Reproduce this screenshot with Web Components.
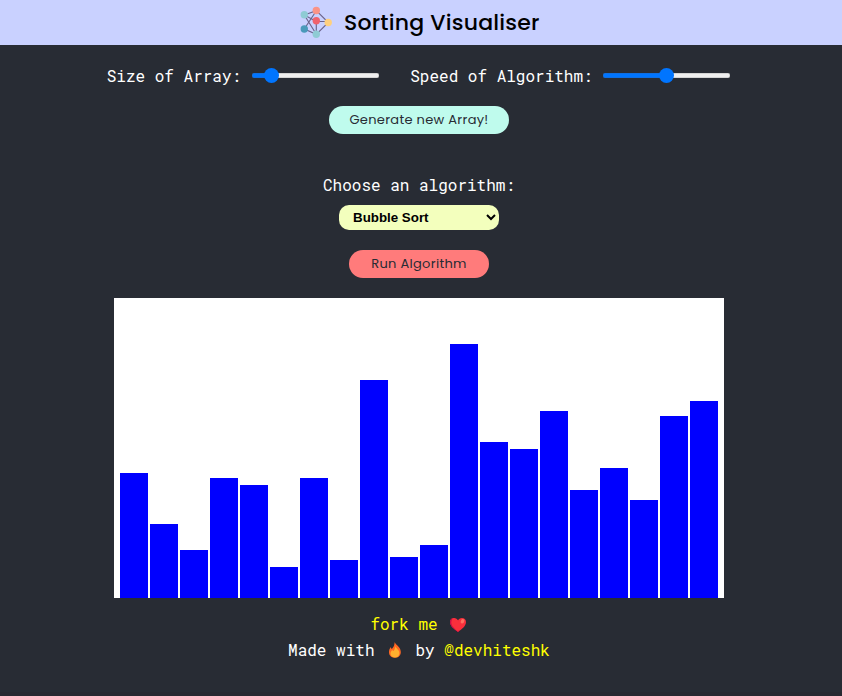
<!DOCTYPE html>
<html lang="en">
<head>
<meta charset="utf-8">
<title>Sorting Visualiser</title>
<style>
html,body{margin:0;background:#282c34}
body{height:696px;overflow:hidden;font:450 16px/26px "Roboto Mono","DejaVu Sans Mono",monospace;color:#fff}
</style>
</head>
<body>
<sorting-app></sorting-app>
<script>
function define(name, html, setup) {
  const t = document.createElement('template');
  t.innerHTML = html;
  customElements.define(name, class extends HTMLElement {
    constructor() {
      super();
      this.attachShadow({mode: 'open'}).append(t.content.cloneNode(true));
    }
    connectedCallback() { if (setup) setup(this, this.shadowRoot); }
  });
}

define('graph-logo', `
<style>:host{display:block;width:32px;height:32px}svg{display:block}</style>
<svg width="32" height="32" viewBox="0 0 32 32">
  <g stroke="#6b638b" stroke-width="1.15" fill="none">
    <path d="M4.300 9L16.300 4.700L28.300 16.500L16.300 28.300L4.300 23L16.300 4.700M4.300 9L16.300 28.300M4.300 9L16.300 15.500H28.300M16.300 15V28.300"/>
  </g>
  <circle cx="16.300" cy="4.500" r="3.700" fill="#fa9387"/>
  <circle cx="4.300" cy="8.800" r="3.700" fill="#8fcbd4"/>
  <circle cx="16.300" cy="14.800" r="3.700" fill="#f0616d"/>
  <circle cx="28.200" cy="16.500" r="3.700" fill="#ffd07d"/>
  <circle cx="4.300" cy="23" r="3.700" fill="#4a9aba"/>
  <circle cx="16.300" cy="28.300" r="3.700" fill="#8fcbd4"/>
</svg>`);

define('app-header', `
<style>
:host{display:flex;height:45px;box-sizing:border-box;padding:0 3px 0 0;background:#c9d1ff;color:#000;align-items:center;justify-content:center;gap:12px}
h1{margin:0;width:195px;white-space:nowrap;font:500 22px/44px Poppins,Inter,sans-serif;letter-spacing:.2px}
graph-logo{margin-bottom:1px}
</style>
<graph-logo></graph-logo><h1><slot></slot></h1>`);

define('range-field', `
<style>
:host{display:flex;align-items:center;height:24px}
label{white-space:pre}
input{-webkit-appearance:none;appearance:none;background:none;margin:0 1px 1px 10.6px;width:127px;height:16px}
input::-webkit-slider-runnable-track{height:5px;border-radius:2px;box-shadow:inset 0 0 0 .5px rgba(90,90,90,.35);background:linear-gradient(90deg,#0075ff var(--at),#efefef var(--at))}
input::-webkit-slider-thumb{-webkit-appearance:none;width:15px;height:15px;margin-top:-5px;border-radius:50%;background:#0075ff}
</style>
<label><slot></slot></label><input type="range" min="0" max="100">`,
(el, root) => {
  const input = root.querySelector('input');
  input.value = el.getAttribute('value');
  const paint = () => input.style.setProperty('--at', `calc(8px + (100% - 16px) * ${input.value / 100})`);
  input.addEventListener('input', paint);
  paint();
});

define('pill-button', `
<style>
:host{display:block}
button{display:block;width:100%;height:28px;padding:0 0 1px;border:0;border-radius:14px;background:var(--fill);color:#282c34;font:400 13px/27px Poppins,Inter,sans-serif;letter-spacing:.3px;white-space:nowrap}
</style>
<button><slot></slot></button>`);

define('algorithm-select', `
<style>
:host{display:block;width:160px;height:25px}
select{display:block;width:160px;height:25px;border:0;border-radius:10px;padding:0 1px 0 10px;background:#f3ffbd;color:#000;font:700 13.333px "Liberation Sans",Arial,sans-serif}
</style>
<select><option>Bubble Sort</option><option>Selection Sort</option><option>Insertion Sort</option><option>Merge Sort</option><option>Quick Sort</option></select>`);

define('bar-chart', `
<style>
:host{display:flex;box-sizing:border-box;width:610px;height:300px;padding:0 6px;background:#fff;align-items:flex-end;gap:2px}
i{display:block;width:28px;background:#00f}
</style>`,
(el, root) => {
  for (const v of el.getAttribute('values').split(',')) {
    const bar = document.createElement('i');
    bar.style.height = v + 'px';
    root.append(bar);
  }
});

define('heart-icon', `
<style>:host{display:block;width:18px;height:18px;white-space:normal;line-height:0}svg{display:block}</style>
<svg width="18" height="18" viewBox="0 0 18 18">
  <path d="M9 16C5 13 1 10 1 6C1 3.600 2.800 2 5 2C7 2 8.300 3 9 4.400C9.700 3 11 2 13 2C15.200 2 17 3.600 17 6C17 10 13 13 9 16Z" fill="#f92f3c"/>
  <path d="M9 16C5 13 1 10 1 6C1 4.200 2 2.900 3.400 2.300C1.800 8 5 12.500 10.300 15Z" fill="#ca0b4a"/>
  <path d="M8.700 15.200C5 12.400 2.300 9.700 2.300 6.200C2.300 4.300 3.200 3 4.600 2.200L9 4.600L12 12.500Z" fill="#f92f3c"/>
  <ellipse cx="13.500" cy="5.300" rx="1.700" ry="2.300" transform="rotate(30 13.500 5.300)" fill="#ff6f60"/>
</svg>`);

define('fire-icon', `
<style>:host{display:block;width:18px;height:18px;white-space:normal;line-height:0}svg{display:block}</style>
<svg width="18" height="18" viewBox="0 0 18 18">
  <path d="M8.600 1C9 3 13.200 5.200 14.300 8.500C16 13 13.500 16.800 9 16.800C4.500 16.800 2.200 13.300 3.200 9.300C3.500 7.800 4.200 6.800 4.900 6C5 7 5.300 7.500 5.800 8C7.600 6 8.700 4 8.600 1Z" fill="#ff6723"/>
  <path d="M9.300 5C9.500 7 13.700 9 13.400 12.200C13.200 15 11.500 16.500 9 16.500C6.300 16.500 4.400 14.800 4.500 12.300C4.600 10.600 5.800 9.800 6.300 9C6.600 9.600 7 9.800 7.500 10.100C8.500 8.800 9.300 7 9.300 5Z" fill="#ffb02e"/>
</svg>`);

define('app-footer', `
<style>
:host{display:flex;flex-direction:column;align-items:center}
p{display:flex;margin:0;height:26px;align-items:center;white-space:pre}
a{color:#ff0}
heart-icon{margin:2px 1px 0 11px}
fire-icon{margin:0 11.5px}
</style>
<p><a>fork me</a><heart-icon></heart-icon></p>
<p><span>Made with</span><fire-icon></fire-icon><span>by </span><a>@devhiteshk</a></p>`);

define('sorting-app', `
<style>
:host{display:flex;flex-direction:column;height:696px}
main{flex:1;display:flex;flex-direction:column;align-items:center;padding:19px 4px 0 0}
.sliders{display:flex;gap:30.5px;margin-bottom:18px}
.gen{width:180px;--fill:#bffbed}
.run{width:140px;--fill:#ff7b7b;margin:20px 0}
.choose{margin:38px 0 7px}
app-footer{margin-top:13px}
.edge{height:4px;background:#282931}
</style>
<app-header>Sorting Visualiser</app-header>
<main>
  <div class="sliders">
    <range-field value="11">Size of Array:</range-field>
    <range-field value="50">Speed of Algorithm:</range-field>
  </div>
  <pill-button class="gen">Generate new Array!</pill-button>
  <div class="choose">Choose an algorithm:</div>
  <algorithm-select></algorithm-select>
  <pill-button class="run">Run Algorithm</pill-button>
  <bar-chart values="125,74,48,120,113,31,120,38,218,41,53,254,156,149,187,108,130,98,182,197"></bar-chart>
  <app-footer></app-footer>
</main>
<div class="edge"></div>`);
</script>
</body>
</html>
